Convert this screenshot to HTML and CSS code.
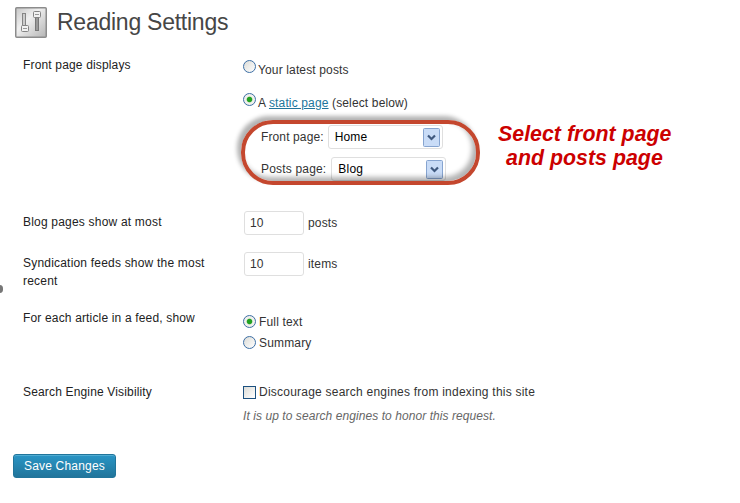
FILE: index.html
```html
<!DOCTYPE html>
<html lang="en">
<head>
<meta charset="utf-8">
<title>Reading Settings</title>
<link rel="stylesheet" href="styles.css">
</head>
<body>
<header class="heading">
  <svg width="32" height="31" viewBox="0 0 32 31">
    <defs><linearGradient id="g" x1="0" y1="0" x2="1" y2="1"><stop offset="0" stop-color="#c6c6c6"/><stop offset=".4" stop-color="#f0f0f0"/><stop offset="1" stop-color="#b4b4b4"/></linearGradient></defs>
    <rect x=".75" y=".75" width="30.5" height="29.5" rx="1" fill="url(#g)" stroke="#8c8c8c" stroke-width="1.5"/>
    <rect x="7.500" y="6.500" width="3" height="13" fill="#ccc" stroke="#858585"/>
    <rect x="20.500" y="9.500" width="3" height="14" fill="#999" stroke="#777"/>
    <rect x="6.500" y="18.500" width="7" height="6" rx="1" fill="#f2f2f2" stroke="#858585"/>
    <rect x="18.500" y="4.500" width="7" height="6" rx="1" fill="#f2f2f2" stroke="#858585"/>
    <path d="M8 21.500h4M20 7.500h4" stroke="#999"/>
  </svg>
  <h1 class="title">Reading Settings</h1>
</header>
<i class="collapse-handle"></i>
<form class="form">
  <section class="row row-front">
    <div class="label">Front page displays</div>
    <div class="field">
      <label class="choice"><i class="radio"></i><span>Your latest posts</span></label>
      <label class="choice choice-static"><i class="radio on"></i><span>A <a class="link">static page</a> (select below)</span></label>
      <div class="pages">
        <div class="page-row"><span>Front page:</span><span class="select"><span>Home</span><svg width="17" height="19" viewBox="0 0 17 19"><use href="#chev"/></svg></span></div>
        <div class="page-row page-row-posts"><span>Posts page:</span><span class="select"><span>Blog</span><svg width="17" height="19" viewBox="0 0 17 19"><g id="chev"><rect x=".5" y=".5" width="16" height="18" rx="1" fill="#c9dcf7" stroke="#86a4d0"/><path d="M5 7.500l3.500 3.500 3.500-3.500" fill="none" stroke="#3f597f" stroke-width="2.200"/></g></svg></span></div>
        <div class="highlight"></div>
        <p class="note">Select front page<br><span class="note-second">and posts page</span></p>
      </div>
    </div>
  </section>
  <section class="row row-blog">
    <div class="label">Blog pages show at most</div>
    <div class="field number"><span class="input">10</span><span>posts</span></div>
  </section>
  <section class="row row-feed">
    <div class="label">Syndication feeds show the most recent</div>
    <div class="field number"><span class="input">10</span><span>items</span></div>
  </section>
  <section class="row row-article">
    <div class="label">For each article in a feed, show</div>
    <div class="field options">
      <label class="choice"><i class="radio on"></i><span>Full text</span></label>
      <label class="choice"><i class="radio"></i><span>Summary</span></label>
    </div>
  </section>
  <section class="row row-search">
    <div class="label">Search Engine Visibility</div>
    <div class="field">
      <label class="choice"><i class="check"></i><span class="discourage">Discourage search engines from indexing this site</span></label>
      <p class="hint">It is up to search engines to honor this request.</p>
    </div>
  </section>
</form>
<button class="save" type="button">Save Changes</button>
</body>
</html>
```
FILE: styles.css
```css
* { box-sizing: border-box; }
body { margin: 0; height: 503px; overflow: hidden; position: relative; background: #fff; color: #333; font: 12px/18px "Liberation Sans", Arial, sans-serif; letter-spacing: .16px; }
.heading { display: flex; align-items: flex-start; height: 56px; padding: 7px 0 0 15px; gap: 10px; }
.title { margin: 0; font-size: 23px; line-height: 30px; font-weight: 400; color: #464646; letter-spacing: -.25px; white-space: nowrap; }
.collapse-handle { position: absolute; left: -4px; top: 285px; width: 7px; height: 8px; border-radius: 4px; background: #777; }
.form { padding-left: 23px; }
.row { display: grid; grid-template-columns: 220px 1fr; align-items: start; }
.row-front { height: 155px; }
.row-blog { height: 41px; }
.row-feed { height: 57px; }
.row-article { height: 74px; }
.row-search { height: 71px; }
.label { width: 200px; color: #222; }
.row-blog .label, .row-feed .label { padding-top: 2px; letter-spacing: .2px; }
.choice { display: flex; align-items: center; gap: 3px; height: 21px; white-space: nowrap; }
.row-front .choice { align-items: flex-start; gap: 2px; height: 18px; margin-top: 4px; letter-spacing: .14px; }
.row-front .choice span { padding-top: 1px; }
.row-front .choice-static { margin-top: 15px; }
.radio { flex: none; width: 13px; height: 13px; border: 1px solid #3d6fa5; border-radius: 50%; background: linear-gradient(135deg, #dcdcd7, #fff); }
.radio.on { background: radial-gradient(circle, #21a121 0 2.2px, #f0f0ec 3.3px); }
.check { flex: none; width: 13px; height: 13px; border: 1px solid #1c5180; background: linear-gradient(135deg, #dcdcd7, #fff); }
.link { color: #21759b; text-decoration: underline; }
.pages { position: relative; padding: 14px 0 0 18px; display: grid; grid-auto-rows: 24px; row-gap: 8px; letter-spacing: .12px; }
.page-row { display: flex; align-items: center; gap: 4px; }
.page-row-posts { gap: 5px; letter-spacing: .18px; }
.select { display: flex; justify-content: space-between; align-items: center; width: 115px; height: 24px; padding: 0 2px 0 6px; border: 1px solid #dfdfdf; border-radius: 3px; color: #000; }
.highlight { position: absolute; left: -2px; top: 9px; width: 239px; height: 65px; border: 4px solid #c4472e; border-radius: 32px; box-shadow: -4px -4px 4px rgba(0, 0, 0, .3), inset -4px -4px 5px rgba(0, 0, 0, .3); }
.note { position: absolute; left: 255px; top: 11px; margin: 0; color: #c00; font: italic bold 21.3px/24px "Liberation Sans", Arial, sans-serif; white-space: nowrap; letter-spacing: .04px; }
.note-second { margin-left: 8px; }
.number { display: flex; align-items: center; gap: 4px; padding-left: 1px; }
.input { width: 60px; height: 24px; border: 1px solid #dfdfdf; border-radius: 3px; padding: 2px 5px; }
.options { padding-top: 2px; }
.row-search .choice { height: 18px; }
.discourage { letter-spacing: .23px; }
.hint { margin: 6px 0 0; color: #666; font-style: italic; letter-spacing: .07px; }
.save { display: block; width: 103px; height: 24px; margin: 0 0 0 13px; padding: 0; border: 1px solid #21759b; border-radius: 3px; background: linear-gradient(#2a95c5, #21759b); box-shadow: inset 0 1px 0 #50acd2; color: #fff; font: 12px/22px "Liberation Sans", Arial, sans-serif; letter-spacing: .2px; }
```
